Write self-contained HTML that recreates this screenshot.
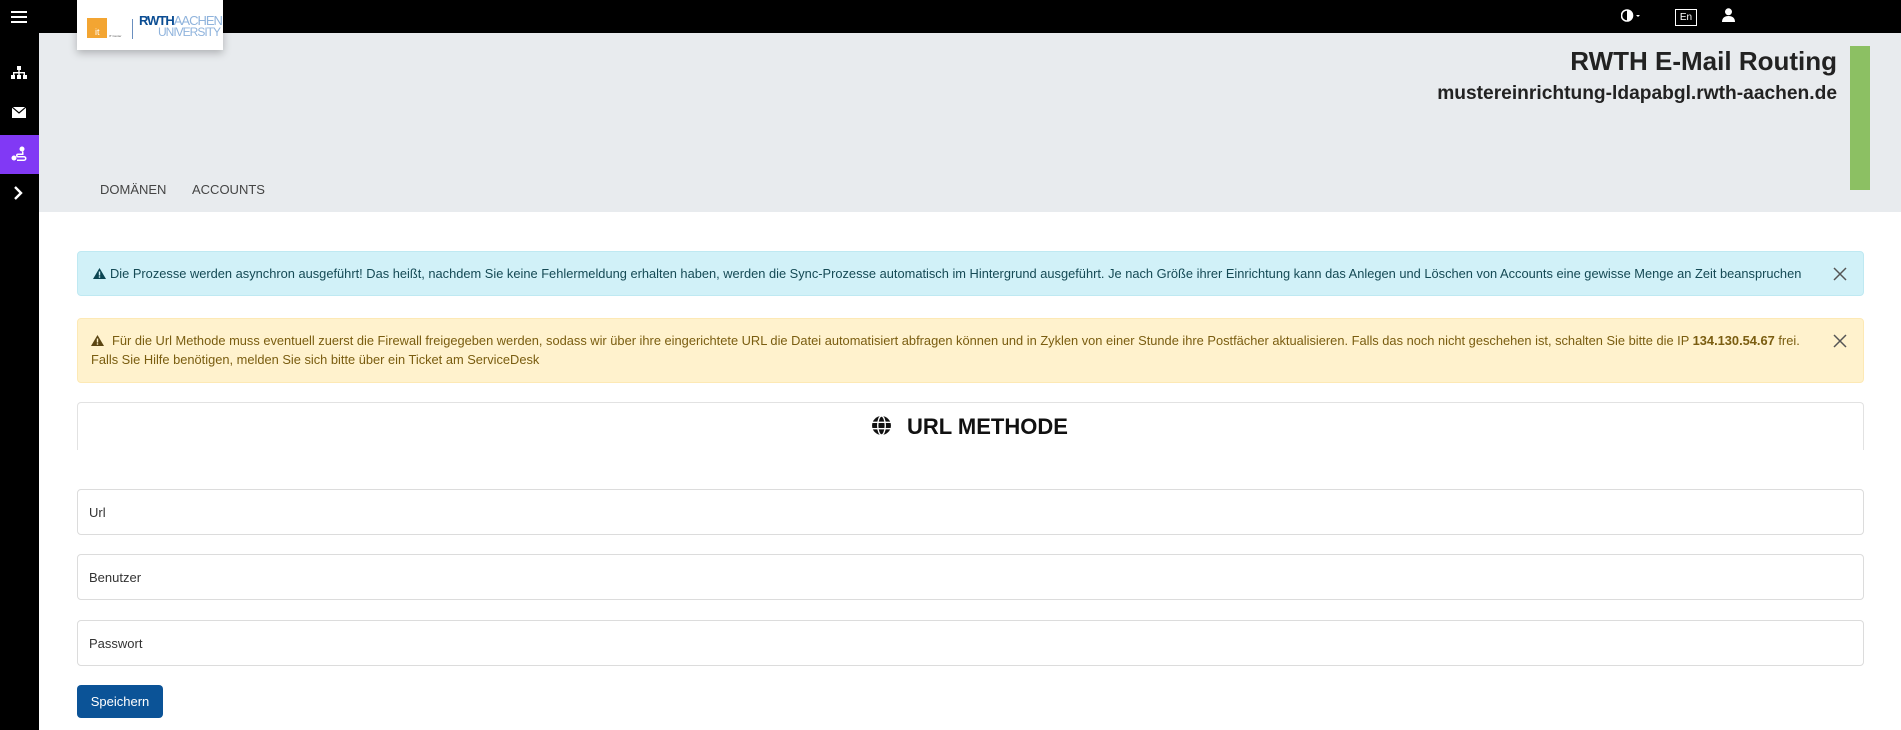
<!DOCTYPE html>
<html><head><meta charset="utf-8"><style>
*{box-sizing:border-box;margin:0;padding:0}
body{width:1901px;height:730px;overflow:hidden;background:#fff;font-family:"Liberation Sans",Arial,sans-serif;position:relative}
.abs{position:absolute}
#top{left:0;top:0;width:1901px;height:33px;background:#000}
#side{left:0;top:0;width:39px;height:730px;background:#000}
#hdr{left:39px;top:33px;width:1862px;height:179px;background:#e8ebee}
.alert{position:absolute;left:77px;width:1787px;border:1px solid;border-radius:4px;font-size:12.85px;line-height:19px}
.close{position:absolute;right:14px;top:50%;margin-top:-9px;width:18px;height:18px}
.inp{position:absolute;left:77px;width:1787px;height:46px;border:1px solid #dcdcdc;border-radius:4px;font-size:13px;color:#333;padding:15px 0 0 11px}
</style></head><body>
<div id="top" class="abs"></div>
<div id="side" class="abs"></div>
<div id="hdr" class="abs"></div>
<svg class="abs" style="left:11px;top:10px" width="16" height="14"><rect y="1" width="16" height="2" fill="#fff"/><rect y="6" width="16" height="2" fill="#fff"/><rect y="11" width="16" height="2" fill="#fff"/></svg>
<svg class="abs" style="left:11px;top:66px" width="16" height="14" fill="#fff"><rect x="6" y="0" width="4" height="4"/><rect x="7.3" y="4" width="1.4" height="3"/><rect x="2" y="6" width="12" height="1.4"/><rect x="2" y="6" width="1.4" height="3"/><rect x="12.6" y="6" width="1.4" height="3"/><rect x="7.3" y="6" width="1.4" height="3"/><rect x="0" y="9" width="4" height="4"/><rect x="6" y="9" width="4" height="4"/><rect x="12" y="9" width="4" height="4"/></svg>
<svg class="abs" style="left:12px;top:107px" width="14" height="11"><rect width="14" height="11" fill="#fff"/><path d="M0 0L7 6L14 0" stroke="#000" stroke-width="1.2" fill="none"/></svg>
<div class="abs" style="left:0;top:135px;width:39px;height:39px;background:#8139f5"></div>
<svg class="abs" style="left:11px;top:146px" width="16" height="16" fill="#fff"><circle cx="3" cy="12" r="2.5"/><circle cx="11" cy="3" r="2.5"/><path d="M11 5.5v2H7a2 2 0 0 0 0 4h6a1 1 0 0 1 0 2H6v1.5h7a2.5 2.5 0 0 0 0-5H7a.5.5 0 0 1 0-1h5.5v-3.5z"/></svg>
<svg class="abs" style="left:13px;top:186px" width="10" height="14"><path d="M2 1L8 7L2 13" stroke="#fff" stroke-width="2.4" fill="none"/></svg>
<div class="abs" style="left:77px;top:0;width:146px;height:50px;background:#fff;box-shadow:0 3px 8px rgba(0,0,0,.25)"></div>
<div class="abs" style="left:87px;top:18px;width:20px;height:20px;background:#f3a532;color:#fff;font-size:9px;padding:9px 0 0 8px">it</div>
<div class="abs" style="left:109px;top:34px;font-size:3px;color:#555">IT Center</div>
<div class="abs" style="left:132px;top:19px;width:1px;height:20px;background:#6a8fbf"></div>
<div class="abs" style="left:139px;top:15px;font-size:13px;font-weight:bold;color:#0b4d93;letter-spacing:-1px;line-height:12px">RWTH<span style="color:#8fb3dc;font-weight:normal;letter-spacing:-1px">AACHEN</span></div>
<div class="abs" style="left:158px;top:26px;font-size:12px;color:#8fb3dc;letter-spacing:-1px;line-height:12px">UNIVERSITY</div>
<svg class="abs" style="left:1621px;top:9px" width="20" height="13"><circle cx="6" cy="6.5" r="5.5" fill="none" stroke="#fff" stroke-width="1.6"/><path d="M6 1a5.5 5.5 0 0 1 0 11z" fill="#fff"/><path d="M15 6h4l-2 2z" fill="#fff"/></svg>
<div class="abs" style="left:1675px;top:9px;width:22px;height:17px;border:1px solid #fff;color:#fff;font-size:10px;text-align:center;line-height:15px">En</div>
<svg class="abs" style="left:1722px;top:8px" width="13" height="14" fill="#fff"><circle cx="6.5" cy="3.8" r="3.5"/><path d="M0 14c0-4 2.5-6 6.5-6s6.5 2 6.5 6z"/></svg>
<div class="abs" style="right:64px;top:46px;font-size:26px;font-weight:bold;color:#222">RWTH E-Mail Routing</div>
<div class="abs" style="right:64px;top:83px;font-size:19.2px;font-weight:bold;color:#222">mustereinrichtung-ldapabgl.rwth-aachen.de</div>
<div class="abs" style="left:1850px;top:46px;width:20px;height:144px;background:#8cc063"></div>
<div class="abs" style="left:100px;top:182px;font-size:13px;color:#444">DOMÄNEN</div>
<div class="abs" style="left:192px;top:182px;font-size:13px;color:#444">ACCOUNTS</div>
<div class="alert" style="top:251px;height:45px;background:#d1f1f8;border-color:#bfe9f2;color:#154a55;padding:12px 0 0 15px">
<svg width="13" height="11" style="vertical-align:-1px;margin-right:4px"><path d="M6.5 0L13 11H0z" fill="#0c4653"/><rect x="5.8" y="3.5" width="1.4" height="4" fill="#d1f1f8"/><rect x="5.8" y="8.3" width="1.4" height="1.4" fill="#d1f1f8"/></svg>Die Prozesse werden asynchron ausgeführt! Das heißt, nachdem Sie keine Fehlermeldung erhalten haben, werden die Sync-Prozesse automatisch im Hintergrund ausgeführt. Je nach Größe ihrer Einrichtung kann das Anlegen und Löschen von Accounts eine gewisse Menge an Zeit beanspruchen
<svg class="close" viewBox="0 0 18 18"><path d="M3 3L15 15M15 3L3 15" stroke="#555" stroke-width="1.5"/></svg></div>
<div class="alert" style="top:318px;height:65px;background:#fff2cd;border-color:#fde9b5;color:#7a5d10;padding:12px 0 0 13px">
<svg width="13" height="11" style="vertical-align:-1px;margin-right:8px"><path d="M6.5 0L13 11H0z" fill="#5a4512"/><rect x="5.8" y="3.5" width="1.4" height="4" fill="#fff2cd"/><rect x="5.8" y="8.3" width="1.4" height="1.4" fill="#fff2cd"/></svg>Für die Url Methode muss eventuell zuerst die Firewall freigegeben werden, sodass wir über ihre eingerichtete URL die Datei automatisiert abfragen können und in Zyklen von einer Stunde ihre Postfächer aktualisieren. Falls das noch nicht geschehen ist, schalten Sie bitte die IP <b>134.130.54.67</b> frei.<br>Falls Sie Hilfe benötigen, melden Sie sich bitte über ein Ticket am ServiceDesk
<svg class="close" style="top:13px;margin-top:0" viewBox="0 0 18 18"><path d="M3 3L15 15M15 3L3 15" stroke="#555" stroke-width="1.5"/></svg></div>
<div class="abs" style="left:77px;top:402px;width:1787px;height:48px;border:1px solid #e2e2e2;border-bottom:none;border-radius:4px 4px 0 0"></div>
<svg class="abs" style="left:871px;top:415px" width="21" height="21" viewBox="0 0 20 20"><circle cx="10" cy="10" r="9" fill="#111"/><g stroke="#fff" stroke-width="1.3" fill="none"><ellipse cx="10" cy="10" rx="3.6" ry="9"/><path d="M1 7h18M1 13h18"/></g></svg>
<div class="abs" style="left:907px;top:414px;font-size:22px;font-weight:bold;color:#111">URL METHODE</div>
<div class="inp" style="top:489px">Url</div>
<div class="inp" style="top:554px">Benutzer</div>
<div class="inp" style="top:620px">Passwort</div>
<div class="abs" style="left:77px;top:685px;width:86px;height:33px;background:#0b5397;border-radius:4px;color:#fff;font-size:13px;text-align:center;line-height:33px">Speichern</div>
</body></html>
